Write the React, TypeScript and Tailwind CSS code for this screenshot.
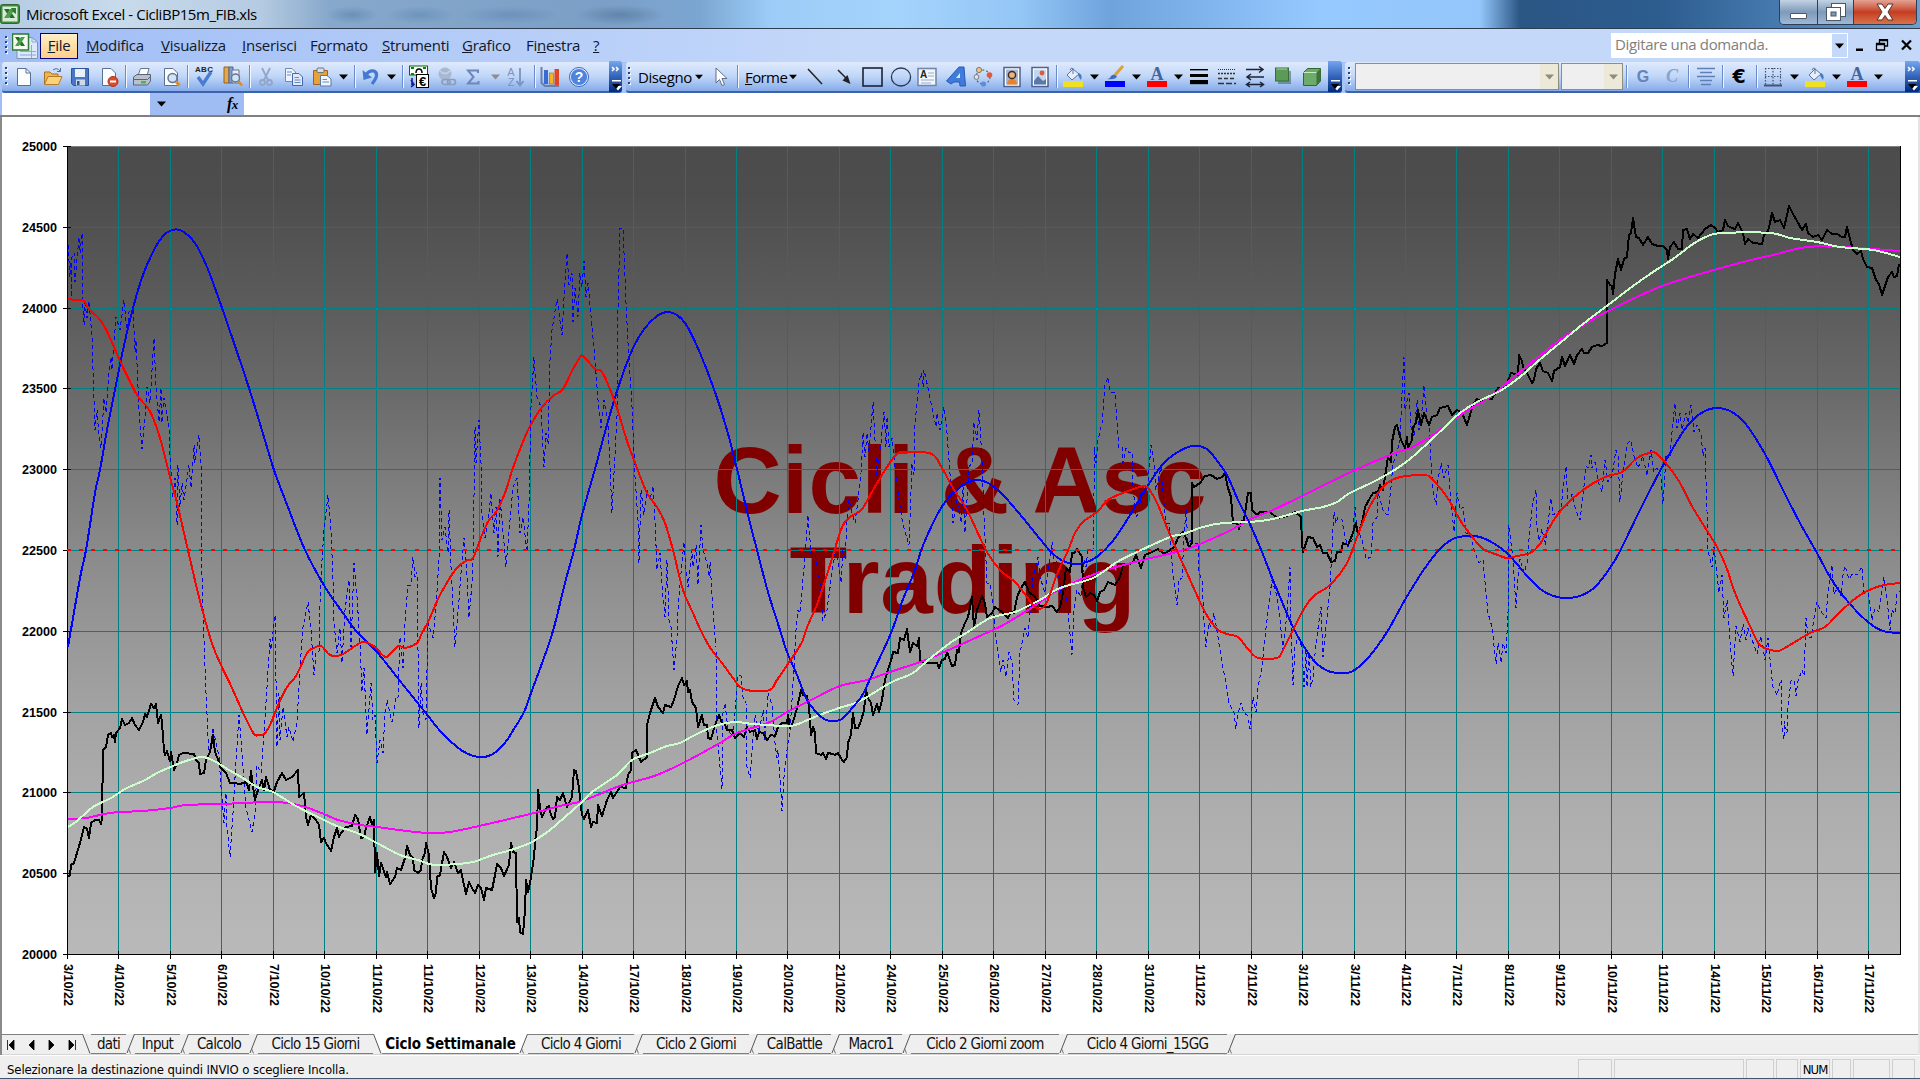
import React from 'react';

// Plot area geometry
const PLOT = { left: 67, right: 1900, top: 146, bottom: 954 };
const X_STEP = 51.46;
const Y_STEP = 80.8;

const gridX = (i: number) => Math.floor(67.5 + i * X_STEP) + 0.5;
const gridY = (i: number) => Math.round(PLOT.top + i * Y_STEP) + 0.5;

const yLabels = ['25000', '24500', '24000', '23500', '23000', '22500', '22000', '21500', '21000', '20500', '20000'];

const dates = [
  '3/10/22', '4/10/22', '5/10/22', '6/10/22', '7/10/22', '10/10/22', '11/10/22', '11/10/22', '12/10/22',
  '13/10/22', '14/10/22', '17/10/22', '18/10/22', '19/10/22', '20/10/22', '21/10/22', '24/10/22', '25/10/22',
  '26/10/22', '27/10/22', '28/10/22', '31/10/22', '1/11/22', '2/11/22', '3/11/22', '3/11/22', '4/11/22',
  '7/11/22', '8/11/22', '9/11/22', '10/11/22', '11/11/22', '14/11/22', '15/11/22', '16/11/22', '17/11/22'
];

// Slow cycle
const slowCycle = `68,647 80,578 86,550 95,493 100,470 107,430 115,390 123,350 133,308 143,275 154,250 164,235 175,229.5
184,232 195,243 207,267 221,305 234,343 249,388 261,427 274,470 286,502 305,550 325,587 343,613 357,632 377,652 400,681
425,712 441,732 457,747 468,754 479,757 491,755 504,744 514,729 524,712 531,693 541,666 553,631 565,583 574,550
582,515 595,469 605,432 618,388 633,348 645,328 657,316 667,312 677,315 687,326 700,353 715,392 727,430 737,469 748,515 757,550
768,592 780,630 787,652 797,675 807,700 817,713 824,719 832,721 842,719 853,707 863,694 875,668 891,633 902,602 915,570 922,548
933,523 943,505 955,491 967,483 977,480 988,483 1003,495 1023,518 1040,539 1052,553 1063,561 1075,564 1087,562 1098,556 1112,542
1127,520 1147,487 1163,464 1178,452 1193,446 1207,449 1218,462 1227,475 1238,500 1249,522 1262,552 1275,585 1293,627 1303,645
1315,662 1328,671 1342,673 1353,671 1368,658 1387,632 1406,598 1425,568 1440,549 1453,539 1467,536 1480,537 1493,543 1508,554
1528,577 1543,591 1557,597 1568,598 1580,596 1595,587 1612,565 1623,545 1640,510 1660,471 1673,448 1688,425 1703,412
1717,408 1730,411 1745,423 1765,454 1783,490 1800,523 1817,553 1833,582 1850,604 1868,622 1883,631 1900,633`;

// Fast cycle
const fastCycle = `68,299 76,300 84,301 89,309 101,321 111,340 121,363 137,395 148,408 155,423 162,445 170,477 177,503 184,533 193,572
198,593 207,627 214,649 221,665 232,688 245,717 254,734 258,735 264,734 270,725 279,703 287,687 296,676 307,653 312,649 321,646 330,655
341,655 355,646 364,642 375,647 386,657 398,646 405,648 417,643 421,635 429,620 439,597 451,576 457,568 467,560 473,558 482,535
489,520 496,512 505,493 514,465 529,428 543,406 553,396 563,389 572,371 579,359 583,356 595,369 601,371 607,382 617,408 627,441
637,468 647,493 657,507 665,523 673,550 683,590 693,613 702,633 711,649 722,663 733,678 740,687 752,691 770,690 777,680 792,658
802,642 808,625 818,602 830,565 837,542 843,525 850,517 862,509 873,490 887,467 898,453 910,452 932,454 942,468 953,488 967,510
982,542 990,557 1002,572 1015,582 1027,597 1033,605 1040,609 1047,602 1057,574 1067,553 1075,533 1083,522 1097,512 1108,500
1123,493 1140,487 1148,488 1158,505 1168,530 1187,573 1205,612 1217,629 1227,634 1238,637 1248,649 1258,658 1277,658 1282,652
1292,632 1305,607 1315,595 1330,585 1347,563 1357,537 1368,510 1378,493 1387,483 1400,477 1425,475 1433,480 1447,497 1460,520
1473,538 1483,549 1495,554 1507,558 1517,556 1530,553 1540,544 1552,523 1563,508 1583,490 1605,477 1622,472 1637,458 1650,453
1658,455 1677,478 1693,508 1717,547 1727,569 1735,593 1750,626 1760,645 1775,651 1783,649 1810,633 1825,627 1840,612 1860,595
1880,586 1900,583`;

const slowAverage = `68,819 86,818 104,814 119,812 143,811 170,808 186,805 221,804 264,802 279,802 302,806 324,814 338,820 361,825 377,827
407,831 429,833 450,832 479,826 530,814 560,806 582,801 617,787 633,782 657,775 685,762 720,743 737,733 770,722 787,712 813,699
840,686 867,680 890,672 923,661 942,653 993,630 1005,624 1025,612 1040,602 1060,589 1100,572 1143,560 1187,549 1227,532 1253,518
1273,510 1302,496 1353,471 1390,455 1410,448 1433,435 1457,417 1490,397 1508,382 1537,358 1560,340 1590,321 1612,309 1637,297
1662,286 1690,277 1714,270 1747,261 1773,255 1807,247 1840,247 1873,249 1900,251`;

const fastAverage = `68,827 77,821 93,807 111,798 125,789 145,780 157,773 173,766 186,761 202,757 214,761 229,770 243,778 257,787 273,792
296,806 324,820 339,827 357,833 377,843 400,855 418,860 429,864 437,865 457,864 473,862 493,855 511,850 530,843 540,837 550,830
565,817 582,802 592,792 617,775 632,760 650,753 667,746 680,743 693,736 710,728 722,724 737,722 753,724 787,726 798,724 817,716
839,708 860,701 890,683 913,673 927,661 950,643 963,635 983,622 993,617 1015,612 1030,605 1040,600 1060,588 1093,578 1117,562
1137,552 1170,537 1183,534 1203,527 1223,523 1249,522 1273,519 1302,511 1323,507 1337,502 1350,493 1373,482 1393,471 1410,459
1430,441 1447,425 1460,413 1477,402 1500,391 1520,377 1537,362 1560,343 1583,324 1612,302 1633,286 1653,272 1673,259 1693,244
1708,236 1723,233 1770,233 1790,238 1817,242 1840,247 1873,250 1900,257`;

const price = `68,877 70,875 71,865 74,863 77,853 80,843 84,827 87,829 89,838 91,823 95,820 99,820 101,824 102,818 103,750 106,747
108,735 111,733 112,737 114,735 115,742 116,733 120,728 122,719 125,725 129,723 132,718 135,725 139,730 143,722 145,714 147,717 151,704
154,708 156,704 158,723 161,715 162,723 164,750 165,755 167,751 170,761 171,752 174,770 177,763 179,755 183,753 194,754 196,760 199,763
200,774 204,773 206,760 210,752 213,735 215,752 219,762 221,768 226,773 230,783 234,783 240,784 246,782 249,790 251,771 253,787 255,800
258,790 262,780 264,790 266,777 270,790 274,791 277,782 282,773 286,780 292,777 298,770 299,797 304,793 306,817 308,825 311,815 316,820
319,825 321,842 324,838 326,843 331,851 334,837 337,828 339,837 341,833 346,827 352,826 355,815 358,819 361,838 364,837 366,828 370,817
372,825 374,820 375,872 377,853 379,876 381,863 386,877 387,872 390,884 395,877 397,868 401,870 405,858 407,846 410,855 413,858 414,870
418,873 421,870 422,860 425,853 426,843 429,855 431,888 434,898 436,893 437,877 440,875 444,852 447,857 451,868 454,862 458,873 461,870
464,885 466,894 469,882 472,888 475,893 478,885 481,888 484,900 486,888 492,890 495,875 497,864 501,868 504,876 509,865 511,843 513,852
516,853 517,922 519,918 520,932 523,934 525,910 526,880 528,892 530,883 534,857 536,832 537,830 538,790 540,807 542,817 547,807 549,806
551,815 553,819 555,817 557,797 560,800 563,793 567,807 572,797 574,770 576,771 579,788 582,815 584,819 588,810 591,827 593,822 597,823
598,805 602,816 607,800 611,792 613,798 620,787 626,788 628,775 631,770 632,753 636,750 641,762 647,757 647,725 650,713 655,698 658,707
663,713 665,705 671,707 674,700 678,686 682,678 684,685 687,681 688,692 690,690 692,702 696,708 698,727 702,715 704,725 707,725 708,738
711,739 715,725 719,715 722,723 725,725 727,730 732,730 735,738 740,733 744,737 747,727 750,732 755,730 757,739 759,732 763,733 767,740
771,735 775,736 778,727 782,723 787,723 788,715 790,728 793,722 797,708 801,690 803,695 807,696 809,707 811,735 813,727 815,733 816,753
821,755 823,753 826,759 828,753 833,754 835,755 838,753 842,760 844,762 847,757 848,743 851,735 853,713 855,728 858,728 861,721 864,710
866,690 868,698 871,703 873,715 877,704 879,712 882,700 885,680 888,670 892,657 893,652 898,653 900,638 904,640 907,629 910,652 913,643
917,646 919,638 920,660 925,663 937,663 939,668 942,660 945,659 947,652 952,666 955,665 957,650 959,652 961,633 965,623 968,617 972,597
974,627 977,610 982,596 985,603 987,617 992,613 995,607 1002,612 1008,618 1011,612 1014,613 1017,597 1021,588 1025,582 1029,592
1035,597 1040,606 1047,607 1052,606 1057,612 1060,607 1063,593 1066,568 1070,572 1072,553 1074,553 1077,549 1082,557 1083,587 1086,597
1090,593 1094,595 1097,601 1100,592 1104,590 1108,582 1115,585 1120,577 1123,565 1128,565 1133,562 1136,555 1141,568 1145,555 1152,552
1158,549 1164,554 1170,550 1174,547 1178,538 1183,532 1186,538 1189,547 1192,543 1192,483 1194,487 1200,483 1205,476 1211,475 1217,479
1222,477 1225,473 1228,488 1231,497 1233,523 1237,523 1239,529 1241,522 1244,520 1248,493 1251,493 1252,510 1257,515 1260,512 1270,512
1277,518 1287,516 1295,512 1301,517 1302,543 1303,552 1308,537 1313,538 1317,547 1320,545 1323,553 1327,553 1331,562 1335,561 1337,552
1341,552 1343,543 1348,545 1353,533 1356,523 1358,535 1362,523 1365,507 1370,498 1373,493 1378,492 1380,485 1383,490 1385,477 1388,457
1391,462 1392,442 1395,427 1397,425 1401,440 1405,448 1407,437 1408,448 1412,440 1413,427 1416,423 1418,410 1421,425 1424,413 1429,425
1432,417 1437,415 1440,408 1448,406 1452,415 1457,410 1462,413 1467,425 1470,415 1473,405 1477,399 1482,402 1487,398 1492,399 1498,388
1505,388 1511,373 1518,375 1519,355 1522,361 1523,367 1526,371 1532,383 1534,380 1536,369 1540,363 1543,371 1548,373 1552,381 1554,371
1560,367 1562,357 1565,366 1570,355 1574,364 1577,355 1582,349 1584,353 1588,353 1592,347 1597,345 1602,346 1607,343 1607,280 1610,285
1612,286 1613,294 1615,274 1618,259 1621,270 1624,259 1627,257 1629,235 1631,233 1633,218 1636,237 1639,238 1643,245 1648,237 1652,244
1658,246 1663,246 1667,250 1668,259 1670,247 1674,242 1678,249 1682,249 1683,230 1687,229 1690,239 1693,234 1698,238 1705,229 1711,225
1715,228 1718,232 1723,230 1725,220 1728,226 1732,228 1735,229 1738,223 1743,233 1745,244 1748,239 1753,243 1762,244 1764,235 1768,231
1770,223 1772,213 1775,222 1780,220 1784,228 1787,215 1789,206 1793,214 1797,221 1802,230 1806,224 1808,233 1813,237 1818,235 1822,240
1827,230 1832,234 1837,234 1842,237 1845,237 1847,227 1850,239 1853,250 1857,254 1861,251 1863,259 1867,267 1872,268 1876,280 1879,284
1882,295 1885,286 1888,277 1892,272 1894,277 1897,276 1899,264`;

const oscillator = `68,245 70,277 71,262 71,297 72,257 74,253 75,282 79,237 80,253 82,233 82,290 84,325 85,303 87,318 89,301 92,337 94,400
95,430 97,410 99,437 101,448 104,398 106,413 109,370 111,357 112,370 116,317 120,330 124,300 127,333 129,312 133,310 135,352 136,340
139,410 142,449 145,417 147,387 150,403 154,338 156,387 159,422 161,388 162,423 164,398 169,427 170,457 173,497 175,478 177,525 178,465
180,507 182,483 184,500 189,465 191,488 194,445 195,463 199,435 201,463 202,577 204,640 206,693 209,757 213,728 219,757 221,787 224,823
226,793 227,827 230,857 233,813 236,760 239,715 243,767 246,808 252,832 255,813 257,765 261,773 264,733 267,687 270,639 271,650 275,615
277,747 279,693 280,740 283,707 287,737 289,727 293,742 297,723 300,667 303,627 308,602 311,630 314,675 316,653 319,652 320,603 322,560
324,530 328,495 331,530 333,580 334,623 337,653 340,628 342,663 345,610 349,580 351,647 354,563 357,597 360,643 362,692 364,668 367,735
371,683 373,720 375,715 377,763 380,740 383,753 385,712 387,700 392,722 396,697 398,698 400,637 403,668 405,623 408,585 411,585 413,557
415,577 417,572 419,728 421,683 423,713 426,720 428,623 433,638 436,607 439,560 440,478 442,540 445,527 448,553 449,510 451,567 455,647
459,600 461,573 464,538 467,577 469,618 472,583 473,563 475,427 476,463 479,420 481,463 482,513 485,538 488,523 491,493 494,533 496,507
498,557 500,498 504,543 506,567 510,520 513,487 517,478 520,533 523,517 527,552 529,503 531,407 534,357 537,397 541,407 544,467 546,433
548,445 550,360 552,330 557,299 562,335 564,298 567,253 569,285 572,273 573,322 575,288 578,317 580,273 582,287 584,261 586,297 588,283
592,327 595,360 598,400 601,428 604,400 608,423 610,467 612,513 614,473 617,417 618,310 620,228 623,228 626,303 628,343 632,407 635,477
638,520 639,563 641,490 644,515 647,490 650,500 653,486 655,520 657,570 660,553 663,597 665,617 667,560 669,620 671,627 674,670 677,637
678,610 681,573 684,542 686,570 688,587 692,550 693,567 696,545 698,585 701,525 703,550 707,563 709,577 710,562 713,610 716,647 717,733
720,767 722,789 723,713 725,703 728,730 733,737 735,713 738,675 741,676 743,697 746,703 747,767 750,778 752,750 755,715 759,733 763,710
765,740 768,693 772,705 775,743 777,758 778,750 781,793 782,811 784,777 787,750 790,730 792,700 794,667 796,630 798,610 800,613 805,557
808,515 811,553 815,553 820,583 823,621 827,610 831,580 835,553 838,560 841,583 843,550 845,560 847,520 849,500 852,513 855,523 858,500
861,473 863,433 865,457 867,433 869,453 873,402 875,440 877,475 880,453 884,412 886,447 887,417 889,447 892,438 895,467 899,500 903,525
909,545 912,463 914,475 915,423 919,383 921,373 923,387 924,370 928,388 933,413 936,427 937,413 940,430 944,407 947,433 951,487 953,523
957,500 961,523 963,487 965,533 969,467 972,463 974,422 977,440 979,410 982,460 984,517 987,583 990,583 993,603 996,640 1001,672 1003,660
1006,677 1009,652 1012,663 1014,700 1018,705 1020,653 1025,628 1028,638 1030,613 1033,577 1038,557 1040,577 1045,593 1052,542 1054,567
1057,560 1061,593 1065,587 1068,613 1072,655 1074,610 1077,590 1081,597 1084,560 1086,567 1088,550 1093,550 1094,493 1094,447 1096,463
1098,440 1102,423 1105,385 1108,377 1110,392 1115,393 1117,420 1119,448 1122,447 1123,463 1126,448 1129,453 1132,452 1133,487 1136,517
1139,513 1141,493 1145,493 1148,483 1151,445 1154,463 1156,490 1161,467 1163,493 1166,523 1169,523 1172,563 1174,583 1177,605 1179,580
1182,578 1184,537 1186,510 1188,543 1192,540 1195,543 1198,543 1199,573 1202,580 1204,623 1206,647 1209,623 1211,627 1214,613 1218,637
1222,663 1226,682 1229,703 1234,713 1236,729 1238,713 1241,703 1244,713 1247,715 1250,729 1253,697 1256,712 1258,687 1262,667 1265,637
1269,603 1272,580 1276,593 1279,610 1283,650 1287,613 1290,567 1291,627 1293,685 1295,647 1298,637 1302,647 1304,687 1306,650 1307,687
1309,653 1311,687 1313,677 1316,643 1321,607 1323,657 1327,617 1330,587 1332,547 1334,512 1336,523 1338,517 1342,520 1345,537 1348,547
1352,540 1355,507 1357,527 1362,540 1366,559 1371,557 1373,523 1377,517 1378,493 1381,503 1384,513 1388,515 1391,487 1393,463 1396,457
1400,440 1402,393 1404,357 1405,410 1409,393 1411,427 1414,437 1417,400 1419,430 1422,410 1424,385 1427,420 1429,427 1431,460 1433,490
1436,505 1438,480 1441,463 1444,478 1448,465 1451,503 1454,532 1457,493 1460,510 1463,507 1466,533 1470,533 1473,547 1477,558 1479,563
1483,560 1486,593 1488,613 1492,627 1496,664 1498,643 1501,663 1503,643 1506,653 1508,613 1509,525 1513,560 1516,608 1518,577 1520,559
1524,573 1527,563 1530,527 1533,502 1536,490 1537,527 1539,541 1542,529 1545,545 1548,523 1551,498 1553,515 1561,510 1563,488 1566,466
1568,506 1572,494 1576,511 1580,520 1583,496 1586,466 1588,468 1591,455 1592,468 1595,462 1599,484 1602,492 1605,460 1608,482 1612,476
1616,450 1618,456 1620,502 1623,472 1627,444 1631,440 1634,456 1638,468 1643,456 1647,476 1651,450 1654,472 1657,468 1661,476 1663,504
1666,456 1670,456 1672,432 1675,403 1677,428 1680,413 1682,430 1686,413 1688,423 1691,405 1694,432 1697,425 1701,434 1703,456 1705,448
1707,511 1708,551 1712,567 1714,547 1717,575 1719,593 1722,575 1724,618 1727,600 1730,642 1733,676 1736,626 1740,642 1743,624 1746,640
1748,628 1757,654 1761,636 1765,660 1768,638 1771,670 1773,687 1777,695 1781,679 1782,725 1784,739 1784,721 1787,733 1788,705 1791,681
1794,680 1796,696 1798,681 1802,670 1804,676 1806,618 1808,636 1811,638 1814,618 1817,602 1820,610 1826,618 1828,591 1832,565 1834,594
1838,587 1841,596 1843,575 1845,566 1849,579 1853,573 1857,575 1862,567 1864,593 1868,593 1872,620 1875,608 1879,612 1884,577 1887,598
1890,630 1892,610 1895,614 1897,594 1900,591`;

const menus = [
  { key: 'M', rest: 'odifica', box: 'ml-[8px] w-[75px]' },
  { key: 'V', rest: 'isualizza', box: 'w-[81px]' },
  { key: 'I', rest: 'nserisci', box: 'w-[68px]' },
  { pre: 'F', key: 'o', rest: 'rmato', box: 'w-[72px]' },
  { key: 'S', rest: 'trumenti', box: 'w-[80px]' },
  { key: 'G', rest: 'rafico', box: 'w-[64px]' },
  { pre: 'Fi', key: 'n', rest: 'estra', box: 'w-[67px]' },
  { key: '?', rest: '', box: 'w-[20px]' }
];

const tabs = [
  { name: 'dati', box: 'w-[35px]', edge: 'up' },
  { name: 'Input', box: 'w-[45px]', edge: 'up' },
  { name: 'Calcolo', box: 'w-[60px]', edge: 'up' },
  { name: 'Ciclo 15 Giorni', box: 'w-[115px]', edge: 'down' },
  { name: 'Ciclo Settimanale', box: 'w-[137px]', edge: 'up', active: true },
  { name: 'Ciclo 4 Giorni', box: 'w-[106px]', edge: 'up' },
  { name: 'Ciclo 2 Giorni', box: 'w-[106px]', edge: 'up' },
  { name: 'CalBattle', box: 'w-[73px]', edge: 'up' },
  { name: 'Macro1', box: 'w-[62px]', edge: 'up' },
  { name: 'Ciclo 2 Giorni zoom', box: 'w-[148px]', edge: 'up' },
  { name: 'Ciclo 4 Giorni_15GG', box: 'w-[159px]', edge: 'up' }
];

const statusBoxes = ['w-[34px]', 'w-[130px]', 'w-[28px]', 'w-[22px]', 'w-[30px]', 'w-[19px]', 'w-[37px]', 'w-[23px]'];

const Icon = ({ className = '', children }: any) => (
  <svg className={`shrink-0 overflow-visible ${className}`} width="20" height="20" viewBox="0 0 20 20" fill="none">
    {children}
  </svg>
);

const Sep = ({ className = '' }: any) => (
  <div className={`h-[23px] w-[2px] shrink-0 border-l border-[#6a8ccb] bg-[#f1f6fe] ${className}`} />
);

const Caret = ({ className = '', color = '#000' }: any) => (
  <svg className={`shrink-0 ${className}`} width="9" height="6" viewBox="0 0 9 6">
    <path d="M0 0.5H9L4.5 5.5Z" fill={color} />
  </svg>
);

const Grip = ({ className = '' }: any) => (
  <svg className={`shrink-0 ${className}`} width="3" height="20" viewBox="0 0 3 20">
    {[0, 5, 10, 15].map((y) => (
      <g key={y}>
        <rect x="1" y={y + 1} width="2" height="2" fill="#fff" />
        <rect x="0" y={y} width="2" height="2" fill="#27418a" />
      </g>
    ))}
  </svg>
);

const EndCap = ({ className = '', chevrons = true }: any) => (
  <div className={`ml-auto h-[31px] shrink-0 rounded-r-[3px] bg-gradient-to-b from-[#75a6f0] via-[#3464b8] to-[#002a80] ${className}`}>
    <svg width="13" height="31" viewBox="0 0 13 31">
      {chevrons && <path d="M3 6L5 8L3 10M7 6L9 8L7 10" stroke="#fff" strokeWidth="1.6" fill="none" />}
      <rect x="3" y="19" width="9" height="1.5" fill="#fff" />
      <path d="M5 25H13L9 29.5Z" fill="#fff" />
      <path d="M3 23H11L7 28Z" fill="#000" />
    </svg>
  </div>
);

const ExcelLogo = () => (
  <svg width="20" height="20" viewBox="0 0 20 20">
    <rect x="0.5" y="0.5" width="19" height="19" rx="2" fill="#3b8b3f" stroke="#2b6b30" />
    <rect x="2.5" y="2.5" width="15" height="15" fill="#dcebd8" />
    <path d="M4 5H9L15 14H10Z" fill="#23702a" />
    <path d="M10 5H15L9 14H4Z" fill="#4fa04b" />
    <path d="M11 4H16V10L13 8Z" fill="#2f7d35" />
  </svg>
);

const FillIcon = ({ className }: any) => (
  <Icon className={className}>
    <path d="M4 8L10 2L16 7L9 13Z" fill="#e8eef8" stroke="#5576a8" />
    <path d="M10 7V1.5Q8 0 7 3" stroke="#5576a8" />
    <path d="M16 6Q20 8 18 13Q16 11 15 8Z" fill="#4878c0" />
    <rect x="0" y="14" width="20" height="6" fill="#efe122" />
  </Icon>
);

const FontColorIcon = ({ className }: any) => (
  <Icon className={className}>
    <text x="10" y="12.5" textAnchor="middle" fontSize="18" fontWeight="bold" fill="#41669f" fontFamily="Liberation Serif, serif">A</text>
    <rect x="0" y="14" width="20" height="6" fill="#ff0000" />
  </Icon>
);

const Page = () => <path d="M3.5 1.5H12L16.5 6V18.5H3.5Z" fill="#fbfdff" stroke="#5b6f94" />;

const StandardToolbar = () => (
  <div className="flex h-[31px] w-[620px] items-center rounded-[3px] border-b-2 border-[#3c62ad] bg-gradient-to-b from-[#dfeafc] via-[#c0d6f8] to-[#86abe9]">
    <Grip className="ml-[3px]" />
    <Icon className="ml-[6px]"><Page /><path d="M12 1.5V6H16.5" stroke="#5b6f94" /></Icon>
    <Icon className="ml-[9px]">
      <path d="M1.5 17V5H7L9 7H15V10" fill="#f0b648" stroke="#a9702b" />
      <path d="M1.5 17.5L5 9.5H19L15.5 17.5Z" fill="#fbd277" stroke="#b97a2a" />
      <path d="M10 3Q14 0 17 4M17.5 1V4.5H14" stroke="#4d6ca0" />
    </Icon>
    <Icon className="ml-[7px]">
      <path d="M1.5 1.5H18.5V18.5H3.5L1.5 16.5Z" fill="#4a76c6" stroke="#31539a" />
      <rect x="5" y="2" width="10" height="8" fill="#eaf1fb" />
      <rect x="6" y="12.5" width="9" height="6" fill="#cfd9ea" />
      <rect x="7" y="14" width="2.5" height="4" fill="#31539a" />
    </Icon>
    <Icon className="ml-[9px]">
      <Page />
      <circle cx="14" cy="14.5" r="5" fill="#dd4a2a" stroke="#b13219" />
      <rect x="11" y="13.5" width="6" height="2" fill="#fff" />
    </Icon>
    <Sep className="ml-[6px]" />
    <Icon className="ml-[5px]">
      <path d="M6 9L8.5 1.5H17L15 9Z" fill="#fff" stroke="#66758f" />
      <path d="M1.5 10L5 7.5H18.5V14L15.5 18H1.5Z" fill="#b9c1cc" stroke="#596477" />
      <path d="M2 12.5H15.5L18 10" stroke="#596477" />
      <rect x="9" y="14" width="5" height="2.5" fill="#49b84a" />
    </Icon>
    <Icon className="ml-[9px]">
      <Page />
      <circle cx="11.5" cy="11" r="4.5" fill="#cfe4f8" stroke="#66758f" strokeWidth="1.5" />
      <path d="M15 14.5L18.5 18.5" stroke="#dc8b2e" strokeWidth="3" />
    </Icon>
    <Sep className="ml-[6px]" />
    <Icon className="ml-[5px]">
      <text x="10" y="4.5" textAnchor="middle" fontSize="8" fontWeight="bold" fill="#222" textLength="18" fontFamily="Liberation Sans, sans-serif">ABC</text>
      <path d="M4 10L9 17L17 5" stroke="#4a7cd0" strokeWidth="3.4" />
    </Icon>
    <Icon className="ml-[9px]">
      <path d="M1 0H6V16H1Z" fill="#e8a644" stroke="#8f6427" />
      <path d="M6 0H10V16H6Z" fill="#7ba0d8" stroke="#4a669b" />
      <path d="M9 3H16V16H9Z" fill="#e9eff8" stroke="#66758f" />
      <circle cx="12.5" cy="11" r="4" fill="#cfe4f8" stroke="#66758f" strokeWidth="1.4" />
      <path d="M15.5 14.5L19 18.5" stroke="#dc8b2e" strokeWidth="2.6" />
    </Icon>
    <Sep className="ml-[6px]" />
    <Icon className="ml-[5px]">
      <path d="M6 1L12 13M14 1L8 13" stroke="#93a5c8" strokeWidth="1.8" />
      <circle cx="6.5" cy="15.5" r="2.5" stroke="#93a5c8" strokeWidth="1.8" />
      <circle cx="13.5" cy="15.5" r="2.5" stroke="#93a5c8" strokeWidth="1.8" />
    </Icon>
    <Icon className="ml-[8px]">
      <path d="M1.5 1.5H8L11.5 5V14.5H1.5Z" fill="#eef4fd" stroke="#6d8ac0" />
      <path d="M8.5 6.5H15L18.5 10V18.5H8.5Z" fill="#dfe9fa" stroke="#4468ad" />
      <path d="M10.5 10.5H15M10.5 13H16.5M10.5 15.5H16.5M3 5H8M3 8H7" stroke="#6d8ac0" />
    </Icon>
    <Icon className="ml-[8px]">
      <path d="M1.5 3.5H15.5V17.5H1.5Z" fill="#e7a03a" stroke="#9b6420" />
      <rect x="5" y="1" width="7" height="4.5" rx="1" fill="#d8dde6" stroke="#6b7482" />
      <path d="M8.5 8.5H15L19 12V19H8.5Z" fill="#eff5fd" stroke="#5b78ac" />
      <path d="M10.5 12.5H15M10.5 15H17" stroke="#6d8ac0" />
    </Icon>
    <Caret className="ml-[7px]" />
    <Sep className="ml-[6px]" />
    <Icon className="ml-[5px]">
      <path d="M5 8Q8 3 13 4Q19 7 11 17" stroke="#4478d3" strokeWidth="3.2" />
      <path d="M1.5 3L2.5 13L11 10.5Z" fill="#4478d3" />
    </Icon>
    <Caret className="ml-[6px]" />
    <Sep className="ml-[6px]" />
    <Icon className="ml-[5px]">
      <rect x="0.5" y="-1" width="18" height="9" fill="#fff" stroke="#006b00" />
      <path d="M2 1H5M14 1H17M2 7H5" stroke="#008a00" strokeWidth="2" />
      <path d="M7 6Q7 2 10 2T13 6" stroke="#000" strokeWidth="1.5" />
      <rect x="7.5" y="7.5" width="12" height="13" fill="#fff" stroke="#000" />
      <text x="13.5" y="18.5" textAnchor="middle" fontSize="13" fontWeight="bold" fill="#000" fontFamily="Liberation Sans, sans-serif">€</text>
      <path d="M3 11V17.5H5M2 13L5 17.5L2 20" stroke="#1a1a9a" strokeWidth="1.6" />
    </Icon>
    <Icon className="ml-[8px]">
      <circle cx="8" cy="7" r="6.5" fill="#a9b8d2" />
      <path d="M3 4Q8 9 13 4" stroke="#c9d4e6" strokeWidth="1.6" />
      <rect x="5" y="12.5" width="8" height="5" rx="2.5" stroke="#8d9dbb" strokeWidth="1.7" />
      <rect x="10.5" y="12.5" width="8" height="5" rx="2.5" stroke="#8d9dbb" strokeWidth="1.7" />
    </Icon>
    <Icon className="ml-[6px]">
      <path d="M15 6V3.5H5L10.5 10L5 16.5H15.5V14" stroke="#6b87bb" strokeWidth="2" />
    </Icon>
    <Caret className="ml-[8px]" color="#8d8d8d" />
    <Icon className="ml-[6px]">
      <text x="5" y="8.5" textAnchor="middle" fontSize="11" fill="#7b93c0" fontFamily="Liberation Sans, sans-serif">A</text>
      <text x="5" y="19" textAnchor="middle" fontSize="11" fill="#7b93c0" fontFamily="Liberation Sans, sans-serif">Z</text>
      <path d="M14 1V17M10.5 14L14 18.5L17.5 14" stroke="#7b93c0" strokeWidth="1.8" />
    </Icon>
    <Sep className="ml-[8px]" />
    <Icon className="ml-[4px]">
      <path d="M1.5 0V16L5 19H19" stroke="#6a7fae" strokeWidth="2" />
      <rect x="4" y="3" width="4" height="14" fill="#3a6bd0" />
      <rect x="9.5" y="6" width="4" height="11" fill="#f0b52d" stroke="#a66d1a" strokeWidth="0.6" />
      <rect x="14.5" y="2" width="4.5" height="16" fill="#dd4727" />
    </Icon>
    <Icon className="ml-[9px]">
      <circle cx="10" cy="10" r="8.8" fill="#4c84e0" stroke="#e4edfb" strokeWidth="1.4" />
      <circle cx="10" cy="10" r="9.5" stroke="#3a68b8" />
      <text x="10" y="15" textAnchor="middle" fontSize="14" fontWeight="bold" fill="#fff" fontFamily="Liberation Sans, sans-serif">?</text>
    </Icon>
    <EndCap className="w-[13px]" />
  </div>
);

const DrawingToolbar = () => (
  <div className="ml-[4px] flex h-[31px] w-[716px] items-center rounded-[3px] border-b-2 border-[#3c62ad] bg-gradient-to-b from-[#dfeafc] via-[#c0d6f8] to-[#86abe9]">
    <Grip className="ml-[2px]" />
    <span className="ml-[7px] mt-[2px] w-[55px] shrink-0 whitespace-nowrap text-[15px] tracking-[-0.4px]">Dise<u>g</u>no</span>
    <Caret className="ml-[2px] w-[8px]" />
    <Icon className="ml-[7px]">
      <path d="M6 1V16L9.5 12.5L12 18.5L14.5 17.5L12 11.5H17Z" fill="#fff" stroke="#5c6d8c" />
    </Icon>
    <Sep className="ml-[7px]" />
    <span className="ml-[6px] mt-[2px] w-[43px] shrink-0 whitespace-nowrap text-[15px] tracking-[-0.6px]"><u>F</u>orme</span>
    <Caret className="ml-[1px] w-[8px]" />
    <Icon className="ml-[8px]"><path d="M3 2L17 17" stroke="#222" strokeWidth="1.5" /></Icon>
    <Icon className="ml-[9px]">
      <path d="M4 3L14 13" stroke="#222" strokeWidth="1.5" />
      <path d="M16.5 17L13.5 8L8.5 13.5Z" fill="#222" />
    </Icon>
    <Icon className="ml-[8px]"><rect x="1" y="1" width="19" height="18" stroke="#1b2436" strokeWidth="1.6" /></Icon>
    <Icon className="ml-[9px]"><ellipse cx="10" cy="10" rx="9.6" ry="9" stroke="#2b3850" strokeWidth="1.3" /></Icon>
    <Icon className="ml-[6px]">
      <rect x="1" y="1.5" width="18" height="17" fill="#f3f7fd" stroke="#7287ad" strokeWidth="1.6" />
      <text x="6.5" y="11" textAnchor="middle" fontSize="10" fontWeight="bold" fill="#222" fontFamily="Liberation Sans, sans-serif">A</text>
      <path d="M11 6H17M11 9H17M4 13H17M4 16H14" stroke="#9aa9c4" />
    </Icon>
    <Icon className="ml-[9px]">
      <path d="M0.5 14L13 0H18L19.5 19H14L13.5 15H8L5 17Z" fill="#3f7bdc" stroke="#2a5bb0" />
      <path d="M10 11L14 6V11Z" fill="#dbe7fa" />
    </Icon>
    <Icon className="ml-[7px]">
      <circle cx="10" cy="10" r="7" stroke="#59647a" strokeWidth="1.2" strokeDasharray="2 2" />
      <circle cx="6" cy="3" r="2.6" fill="#f4c27f" stroke="#555" strokeWidth="0.7" />
      <circle cx="16.5" cy="8" r="2.8" fill="#e2573b" />
      <circle cx="3.5" cy="10" r="2.4" fill="#dfe6f2" stroke="#555" strokeWidth="0.7" />
      <circle cx="10.5" cy="17" r="2.6" fill="#5e8be0" />
    </Icon>
    <Icon className="ml-[9px]">
      <rect x="2" y="0.5" width="16" height="19" fill="#fff" stroke="#4c628f" strokeWidth="1.5" />
      <rect x="4" y="2.5" width="12" height="15" fill="#a9b8cf" />
      <path d="M5 17.5Q5 12 10 12T15 17.5Z" fill="#e8822b" />
      <circle cx="10" cy="8" r="3.6" fill="#e9b384" stroke="#3b2d22" strokeWidth="1.5" />
    </Icon>
    <Icon className="ml-[8px]">
      <rect x="2" y="0.5" width="16" height="19" fill="#fff" stroke="#4c628f" strokeWidth="1.5" />
      <rect x="4" y="2.5" width="12" height="15" fill="#c3d6f0" />
      <path d="M4 17.5V14L8 9L13 14L16 12V17.5Z" fill="#5b79a8" />
      <circle cx="12" cy="6" r="2.4" fill="#e0593a" />
    </Icon>
    <Sep className="ml-[6px]" />
    <FillIcon className="ml-[5px]" />
    <Caret className="ml-[7px]" />
    <Icon className="ml-[6px]">
      <path d="M2 12Q5 12 6 9Q9 6 12 9Q11 13 2 12Z" fill="#3c6bc4" />
      <path d="M10 8L18 -1" stroke="#dba13a" strokeWidth="3" />
      <rect x="0" y="14" width="20" height="6" fill="#0000ff" />
    </Icon>
    <Caret className="ml-[7px]" />
    <FontColorIcon className="ml-[6px]" />
    <Caret className="ml-[7px]" />
    <Icon className="ml-[6px]">
      <rect x="1" y="2" width="18" height="1.4" fill="#000" />
      <rect x="1" y="7" width="18" height="3" fill="#000" />
      <rect x="1" y="13" width="18" height="4.2" fill="#000" />
    </Icon>
    <Icon className="ml-[8px]">
      <path d="M1 2.5H19" stroke="#333" strokeDasharray="1 1" />
      <path d="M1 6.5H19" stroke="#333" strokeWidth="1.4" strokeDasharray="2 1" />
      <path d="M1 11.5H19" stroke="#333" strokeWidth="1.4" strokeDasharray="4 2" />
      <path d="M1 16.5H19" stroke="#333" strokeWidth="1.4" strokeDasharray="6 2" />
    </Icon>
    <Icon className="ml-[8px]">
      <path d="M1 2.5H18M14 -0.5L18 2.5L14 5.5M2 10H19M6 7L2 10L6 13M2 17.5H18M5 15L1.5 17.5L5 20M15 15L18.5 17.5L15 20" stroke="#1b2436" strokeWidth="1.5" />
    </Icon>
    <Icon className="ml-[8px]">
      <rect x="5" y="4" width="13" height="13" fill="#40505a" opacity="0.5" />
      <rect x="2.5" y="1" width="13" height="13" fill="#5b9a57" stroke="#34703a" />
      <path d="M3.5 2H14" stroke="#a9d3a4" />
    </Icon>
    <Icon className="ml-[9px]">
      <path d="M1.5 5.5L5.5 1.5H18.5V14L14.5 18.5H1.5Z" fill="#6dab68" stroke="#2e6930" />
      <path d="M14.5 18.5V5.5L18.5 1.5V14Z" fill="#3b753d" />
      <path d="M1.5 5.5H14.5" stroke="#cfe8cc" />
    </Icon>
    <EndCap className="w-[14px]" chevrons={false} />
  </div>
);

const DisabledSelect = ({ className }: any) => (
  <div className={`flex h-[27px] shrink-0 items-stretch border border-[#8f8f80] bg-[#efefef] ${className}`}>
    <div className="flex-1" />
    <div className="flex w-[18px] items-center justify-center bg-[#ece9d8]">
      <Caret color="#8d8d80" />
    </div>
  </div>
);

const FormatToolbar = () => (
  <div className="ml-[3px] flex h-[31px] w-[575px] items-center rounded-l-[3px] border-b-2 border-[#3c62ad] bg-gradient-to-b from-[#dfeafc] via-[#c0d6f8] to-[#86abe9]">
    <Grip className="ml-[3px]" />
    <DisabledSelect className="ml-[4px] w-[204px]" />
    <DisabledSelect className="ml-[2px] w-[62px]" />
    <Sep className="ml-[3px]" />
    <div className="ml-[5px] w-[20px] text-center font-['Liberation_Sans',sans-serif] text-[16px] font-bold text-[#6484b8]">G</div>
    <div className="ml-[9px] w-[20px] text-center font-['Liberation_Serif',serif] text-[18px] font-bold italic text-[#8aa3cd]">C</div>
    <Sep className="ml-[6px]" />
    <Icon className="ml-[6px]">
      <path d="M1 1.5H19M4 5.5H16M1 9.5H19M4 13.5H16M5 17.5H15" stroke="#5f7fb6" strokeWidth="1.6" />
    </Icon>
    <Sep className="ml-[6px]" />
    <div className="ml-[5px] w-[20px] text-center font-['DejaVu_Sans',sans-serif] text-[19px] font-bold leading-none text-black">€</div>
    <Sep className="ml-[7px]" />
    <Icon className="ml-[5px]">
      <path d="M2.5 1V18M10 1V18M17.5 1V18M2 1.5H18M2 9.5H18" stroke="#47546e" strokeWidth="1.2" strokeDasharray="1.5 1.5" />
      <rect x="1" y="17.5" width="18" height="2" fill="#47546e" />
    </Icon>
    <Caret className="ml-[7px]" />
    <FillIcon className="ml-[6px]" />
    <Caret className="ml-[7px]" />
    <FontColorIcon className="ml-[6px]" />
    <Caret className="ml-[7px]" />
    <EndCap className="w-[15px]" />
  </div>
);

const TitleBar = () => (
  <div className="flex h-[29px] items-start border-b border-[#2f3d50] bg-[radial-gradient(ellipse_26px_9px_at_352px_15px,#5f86b0b0,transparent),radial-gradient(ellipse_34px_9px_at_420px_15px,#5f86b090,transparent),radial-gradient(ellipse_50px_9px_at_510px_15px,#5f86b090,transparent),radial-gradient(ellipse_44px_10px_at_620px_15px,#55779cb0,transparent),linear-gradient(90deg,#b4cbe2_0px,#c8dbec_120px,#b5cbe2_260px,#86a8cb_330px,#7b9fc6_600px,#7ba6d2_700px,#9dccf8_770px,#a4d3fc_900px,#94c6f6_1020px,#6fa3dc_1110px,#7fb3ec_1200px,#96c9ff_1320px,#94c6fb_1480px,#2a5684_1520px,#2d5c8f_1660px,#477bb0_1780px,#6d9fd0_1920px)]">
    <div className="mt-[4px]"><ExcelLogo /></div>
    <span className="ml-[6px] mt-[3px] whitespace-nowrap text-[15px] leading-[23px] tracking-[-0.45px] text-black">Microsoft Excel - CicliBP15m_FIB.xls</span>
    <div className="ml-auto mr-[3px] flex h-[25px] w-[138px] overflow-hidden rounded-b-[5px] border border-t-0 border-[#2b3f58]">
      <div className="flex w-[38px] items-center justify-center border-r border-[#2b3f58] bg-gradient-to-b from-[#c3d3e4] via-[#7f9ab8] to-[#9db9d6]">
        <div className="mt-[7px] h-[6px] w-[17px] rounded-[1px] border border-[#4c5666] bg-white" />
      </div>
      <div className="flex w-[36px] items-center justify-center border-r border-[#2b3f58] bg-gradient-to-b from-[#c3d3e4] via-[#7f9ab8] to-[#9db9d6]">
        <svg width="20" height="19" viewBox="0 0 20 19">
          <rect x="5.5" y="0.5" width="14" height="13" fill="#fff" stroke="#4c5666" />
          <rect x="0.5" y="4.5" width="14" height="13" fill="#fff" stroke="#4c5666" />
          <rect x="5" y="9" width="5" height="4" fill="#7f9ab8" stroke="#4c5666" />
        </svg>
      </div>
      <div className="flex flex-1 items-center justify-center bg-gradient-to-b from-[#e3a294] via-[#c43c20] to-[#d8714a]">
        <svg width="18" height="18" viewBox="0 0 18 18">
          <path d="M1 1H6L9 5.5L12 1H17L12 9L17 17H12L9 12.5L6 17H1L6 9Z" fill="#fff" stroke="#54322c" />
        </svg>
      </div>
    </div>
  </div>
);

const MenuBar = () => (
  <div className="flex h-[33px] items-center bg-gradient-to-r from-[#a0bdf5] to-[#c4d8f9] to-[45%] text-[15px] tracking-[-0.25px] text-[#10182c]">
    <Grip className="ml-[5px]" />
    <svg className="ml-[4px]" width="27" height="26" viewBox="0 0 27 26">
      <path d="M5 4.5H20L25.5 9V25.5H5Z" fill="#dbe9fb" stroke="#7d93b5" />
      <path d="M20 4.5V9H25.5M8 18.5H24M8 22H24M19.5 12V25" stroke="#8ba8d6" fill="none" />
      <rect x="0.5" y="1" width="16" height="16" fill="#f4faf2" stroke="#2b7b30" strokeWidth="1.5" />
      <path d="M3 4H7L13 13H9Z" fill="#23702a" />
      <path d="M9 4H13L7 13H3Z" fill="#4fa04b" />
    </svg>
    <div className="ml-px flex h-[26px] w-[38px] items-center justify-center border border-[#000080] bg-gradient-to-b from-[#ffefc9] to-[#ffce87]">
      <span><u>F</u>ile</span>
    </div>
    {menus.map((m) => (
      <span key={m.key + m.rest} className={`shrink-0 whitespace-nowrap ${m.box}`}>
        {m.pre}<u>{m.key}</u>{m.rest}
      </span>
    ))}
    <div className="ml-auto flex h-[25px] w-[237px] items-center bg-white">
      <span className="-mt-[3px] flex-1 pl-[4px] text-[15px] tracking-[-0.35px] text-[#808080]">Digitare una domanda.</span>
      <div className="my-px mr-px flex h-[23px] w-[15px] items-center justify-center bg-[#c4d8f9]">
        <Caret />
      </div>
    </div>
    <svg className="ml-[8px] mr-[7px]" width="57" height="14" viewBox="0 0 57 14">
      <rect x="0" y="9.5" width="7" height="2.5" fill="#000" />
      <path d="M23.5 4V1H31.5V7H29M20.5 5H28.5V11H20.5Z" fill="none" stroke="#000" strokeWidth="1.3" />
      <path d="M23 1H32M20 5H29" stroke="#000" strokeWidth="2.4" />
      <path d="M46 1.5L55 10.5M55 1.5L46 10.5" stroke="#000" strokeWidth="2.2" />
    </svg>
  </div>
);

const FormulaBar = () => (
  <div className="flex h-[22px] border-l-2 border-[#a0bdf5] bg-white">
    <div className="w-[148px]" />
    <div className="flex w-[94px] items-center bg-[#9fbcf3]">
      <Caret className="ml-[7px]" />
      <span className="ml-[61px] font-['Liberation_Serif',serif] text-[16px] font-bold italic leading-none tracking-[-0.5px] text-black">f<span className="text-[13px]">x</span></span>
    </div>
  </div>
);

// Catmull-Rom spline through a "x,y x,y" point list
const smoothPath = (points: string) => {
  const p = points.trim().split(/\s+/).map((s) => s.split(',').map(Number));
  let d = `M${p[0][0]} ${p[0][1]}`;
  for (let i = 0; i < p.length - 1; i++) {
    const a = p[Math.max(i - 1, 0)];
    const b = p[i];
    const c = p[i + 1];
    const e = p[Math.min(i + 2, p.length - 1)];
    d += `C${b[0] + (c[0] - a[0]) / 6} ${b[1] + (c[1] - a[1]) / 6} ${c[0] - (e[0] - b[0]) / 6} ${c[1] - (e[1] - b[1]) / 6} ${c[0]} ${c[1]}`;
  }
  return d;
};

const Curve = ({ points, color }: any) => (
  <path d={smoothPath(points)} fill="none" stroke={color} strokeWidth="2" shapeRendering="crispEdges" />
);

const Series = ({ points, color, dashed = false }: any) => (
  <polyline
    points={points}
    fill="none"
    stroke={color}
    strokeWidth={dashed ? 1 : 2}
    strokeDasharray={dashed ? '4 3' : undefined}
    strokeLinejoin="round"
    shapeRendering="crispEdges"
  />
);

const Chart = () => (
  <svg className="block shrink-0" width="1915" height="917" viewBox="2 117 1915 917">
    <defs>
      <linearGradient id="plotBg" x1="0" y1="0" x2="0" y2="1">
        <stop offset="0%" stopColor="#4c4c4c" />
        <stop offset="6%" stopColor="#4d4d4d" />
        <stop offset="20%" stopColor="#5c5c5c" />
        <stop offset="30%" stopColor="#696969" />
        <stop offset="40%" stopColor="#7a7a7a" />
        <stop offset="50%" stopColor="#8a8a8a" />
        <stop offset="60%" stopColor="#979797" />
        <stop offset="70%" stopColor="#a3a3a3" />
        <stop offset="80%" stopColor="#acacac" />
        <stop offset="90%" stopColor="#b3b3b3" />
        <stop offset="100%" stopColor="#b9b9b9" />
      </linearGradient>
    </defs>
    <rect x={PLOT.left} y={PLOT.top} width={PLOT.right - PLOT.left} height={PLOT.bottom - PLOT.top} fill="url(#plotBg)" />

    {/* Watermark */}
    <g fill="#800000" fontFamily="Liberation Sans, Arial, sans-serif" fontWeight="bold" fontSize="94.5">
      <text x="713.5" y="512.5" textLength="493">Cicli &amp; Asc</text>
      <text x="789.5" y="612.5" textLength="346">Trading</text>
    </g>

    {/* Grid */}
    <g stroke="#008080" shapeRendering="crispEdges">
      {yLabels.slice(1, -1).map((l, i) => (
        <line key={l} x1={PLOT.left} x2={PLOT.right} y1={gridY(i + 1)} y2={gridY(i + 1)} />
      ))}
      {dates.slice(1).map((d, i) => (
        <line key={i} x1={gridX(i + 1)} x2={gridX(i + 1)} y1={PLOT.top} y2={PLOT.bottom} />
      ))}
    </g>
    <line x1={PLOT.left} x2={PLOT.right} y1="146.5" y2="146.5" stroke="#808080" shapeRendering="crispEdges" />

    {/* Axes */}
    <g stroke="#000" shapeRendering="crispEdges">
      <line x1="67.5" x2="67.5" y1="146" y2="958" />
      <line x1="1900.5" x2="1900.5" y1="146" y2="955" />
      <line x1="63" x2="1901" y1="954.5" y2="954.5" />
      {yLabels.map((l, i) => (
        <line key={l} x1="63" x2="71" y1={gridY(i)} y2={gridY(i)} />
      ))}
      {dates.map((d, i) => (
        <line key={i} x1={gridX(i)} x2={gridX(i)} y1="951" y2="959" />
      ))}
    </g>

    <g fill="#000" fontFamily="Liberation Sans, Arial, sans-serif" fontWeight="bold" fontSize="13">
      {yLabels.map((l, i) => (
        <text key={l} x="22" y={gridY(i) + 4.5} textLength="35" lengthAdjust="spacingAndGlyphs">{l}</text>
      ))}
      {dates.map((d, i) => (
        <text key={i} transform={`translate(${gridX(i) - 3.5} 964) rotate(90)`} textLength={d.length === 8 ? 49 : 42} lengthAdjust="spacingAndGlyphs">{d}</text>
      ))}
    </g>

    <Series points={oscillator} color="#0000ff" dashed />
    <Series points={price} color="#000" />
    <Curve points={slowAverage} color="#ff00ff" />
    <Curve points={fastAverage} color="#ccffcc" />
    <line x1="67" x2="1900" y1="550" y2="550" stroke="#ff0000" strokeWidth="2" strokeDasharray="4 8" shapeRendering="crispEdges" />
    <Curve points={slowCycle} color="#0000ff" />
    <Curve points={fastCycle} color="#ff0000" />
  </svg>
);

const TabEdge = ({ dir, left, right }: any) => (
  <svg className="shrink-0" width="9" height="20" viewBox="0 0 9 20">
    {dir === 'up' ? (
      <>
        <path d="M0 0H9L1 20H0Z" fill={left} />
        <path d="M9 0V20H1Z" fill={right} />
        <path d="M8.5 0L1 19" stroke="#555" fill="none" />
        <path d="M2.5 14.5L4.5 19.5" stroke="#777" fill="none" />
      </>
    ) : (
      <>
        <path d="M0 0L8 20H0Z" fill={left} />
        <path d="M0 0H9V20H8Z" fill={right} />
        <path d="M0.5 0L8 19.5" stroke="#555" fill="none" />
      </>
    )}
  </svg>
);

const SheetTabs = () => (
  <div className="flex h-[21px] border-b border-[#d5d5d5] bg-[#efefef] font-['DejaVu_Sans_Condensed','DejaVu_Sans',sans-serif] text-[15px] tracking-[-0.7px] text-[#111]">
    <div className="flex w-[80px] items-center border-t border-[#7f7f7f]">
      <svg width="80" height="12" viewBox="2 0 80 12">
        <path d="M7.5 1V11M14 1V11L9 6ZM34 1V11L29 6ZM49 1V11L54 6ZM69 1V11L74 6ZM75.5 1V11" fill="#000" stroke="#000" strokeWidth="0.8" />
      </svg>
    </div>
    <TabEdge dir="down" left="#efefef" right="#efefef" />
    {tabs.map((t, i) => (
      <React.Fragment key={t.name}>
        <div
          className={`flex h-[20px] shrink-0 items-center justify-center whitespace-nowrap border-b border-b-[#7f7f7f] pt-px ${t.box} ${
            t.active ? 'bg-white font-bold tracking-[-0.15px] text-black' : 'border-t border-t-[#7f7f7f]'
          }`}
        >
          {t.name}
        </div>
        <TabEdge dir={t.edge} left={t.active ? '#fff' : '#efefef'} right={tabs[i + 1]?.active ? '#fff' : '#efefef'} />
      </React.Fragment>
    ))}
    <div className="flex-1 border-t border-[#7f7f7f]" />
  </div>
);

const StatusBar = () => (
  <div className="flex h-[23px] items-end border-t border-white bg-[#efefef] pr-[5px] font-['DejaVu_Sans_Condensed','DejaVu_Sans',sans-serif] text-[13px] leading-[17px] text-black">
    <span className="ml-[7px] whitespace-nowrap tracking-[-0.12px]">Selezionare la destinazione quindi INVIO o scegliere Incolla.</span>
    <div className="ml-auto flex gap-[2px]">
      {statusBoxes.map((w, i) => (
        <div key={i} className={`flex h-[19px] items-end justify-center border border-b-0 border-[#cfcfcf] ${w}`}>
          {i === 4 && <span className="tracking-[-0.9px]">NUM</span>}
        </div>
      ))}
    </div>
  </div>
);

export default function App() {
  return (
    <div className="flex h-[1080px] w-[1920px] flex-col overflow-hidden bg-white font-['Open_Sans','Noto_Sans',sans-serif]">
      <TitleBar />
      <MenuBar />
      <div className="flex h-[31px] bg-[#a8c4f5] pl-[2px]">
        <StandardToolbar />
        <DrawingToolbar />
        <FormatToolbar />
      </div>
      <FormulaBar />
      <div className="h-[2px] bg-[#808080]" />
      <div className="flex min-h-0 flex-1 flex-col border-l-2 border-r-2 border-l-[#8a8a8a] border-r-[#e4e4e4]">
        <Chart />
        <SheetTabs />
      </div>
      <StatusBar />
      <div className="h-[2px] shrink-0 border-b border-[#c4d5e6] bg-[#41566e]" />
    </div>
  );
}
